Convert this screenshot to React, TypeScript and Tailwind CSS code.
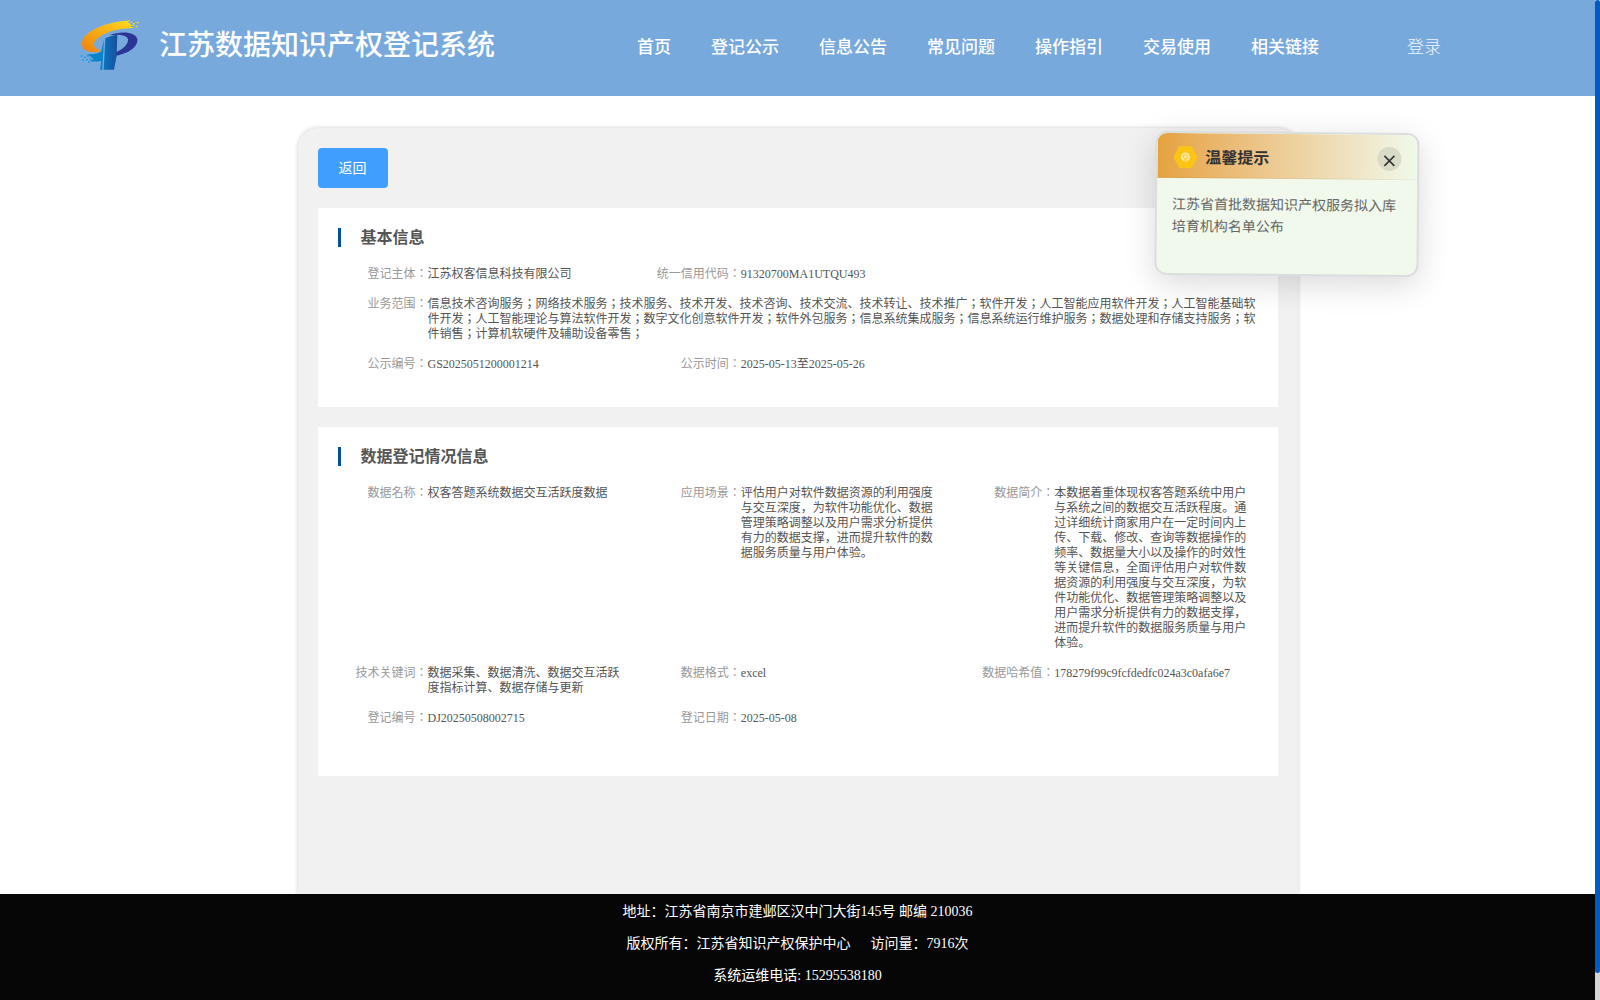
import { useState } from "react";

const NAV = ["首页", "登记公示", "信息公告", "常见问题", "操作指引", "交易使用", "相关链接"];

export default function App() {
  const [showTip, setShowTip] = useState(true);

  return (
    <div className="relative flex h-[1000px] w-[1600px] overflow-hidden bg-white font-['Liberation_Serif','Noto_Sans_CJK_SC',serif]">
      <div className="flex w-[1595px] flex-col">
        {/* HEADER */}
        <header className="flex h-24 shrink-0 items-center bg-[#78a9dd] pl-20 text-white">
          <Logo />
          <h1 className="-mt-[5px] ml-[19px] w-[478px] whitespace-nowrap text-[28px] leading-10 font-medium">
            江苏数据知识产权登记系统
          </h1>
          <nav className="flex gap-10 whitespace-nowrap text-[17px] leading-6 font-medium">
            {NAV.map((item) => (
              <a key={item} href="#">
                {item}
              </a>
            ))}
          </nav>
          <a href="#" className="ml-[88px] text-[17px] leading-6 font-light text-white/90">
            登录
          </a>
        </header>

        {/* CONTENIDO */}
        <main className="mx-auto mt-8 w-[1000px] flex-1 rounded-t-[20px] bg-[#f1f1f1] p-5 shadow-[0_0_4px_rgba(0,0,0,0.2)]">
          <button className="block h-10 w-[70px] rounded bg-[#409eff] pt-px text-sm text-white">返回</button>

          <Card title="基本信息" className="mt-5 h-[199px]">
            <Field label="登记主体">江苏权客信息科技有限公司</Field>
            <Field label="统一信用代码" className="col-span-2">
              91320700MA1UTQU493
            </Field>
            <Field label="业务范围" className="col-span-3">
              信息技术咨询服务；网络技术服务；技术服务、技术开发、技术咨询、技术交流、技术转让、技术推广；软件开发；人工智能应用软件开发；人工智能基础软件开发；人工智能理论与算法软件开发；数字文化创意软件开发；软件外包服务；信息系统集成服务；信息系统运行维护服务；数据处理和存储支持服务；软件销售；计算机软硬件及辅助设备零售；
            </Field>
            <Field label="公示编号">GS2025051200001214</Field>
            <Field label="公示时间">2025-05-13至2025-05-26</Field>
          </Card>

          <Card title="数据登记情况信息" className="mt-5 h-[349px]">
            <Field label="数据名称">权客答题系统数据交互活跃度数据</Field>
            <Field label="应用场景">
              评估用户对软件数据资源的利用强度与交互深度，为软件功能优化、数据管理策略调整以及用户需求分析提供有力的数据支撑，进而提升软件的数据服务质量与用户体验。
            </Field>
            <Field label="数据简介">
              本数据着重体现权客答题系统中用户与系统之间的数据交互活跃程度。通过详细统计商家用户在一定时间内上传、下载、修改、查询等数据操作的频率、数据量大小以及操作的时效性等关键信息，全面评估用户对软件数据资源的利用强度与交互深度，为软件功能优化、数据管理策略调整以及用户需求分析提供有力的数据支撑，进而提升软件的数据服务质量与用户体验。
            </Field>
            <Field label="技术关键词">数据采集、数据清洗、数据交互活跃度指标计算、数据存储与更新</Field>
            <Field label="数据格式">excel</Field>
            <Field label="数据哈希值">178279f99c9fcfdedfc024a3c0afa6e7</Field>
            <Field label="登记编号">DJ20250508002715</Field>
            <Field label="登记日期">2025-05-08</Field>
          </Card>
        </main>

        {/* FOOTER */}
        <footer className="z-10 h-[106px] shrink-0 bg-[#060606] pt-0.5 text-center text-sm leading-8 text-white">
          <p>地址：江苏省南京市建邺区汉中门大街145号 邮编 210036</p>
          <p>
            版权所有：江苏省知识产权保护中心<span className="ml-5">访问量：7916次</span>
          </p>
          <p>系统运维电话: 15295538180</p>
        </footer>
      </div>

      {/* SCROLL */}
      <div className="w-[5px] bg-[#d5d5d5]">
        <div className="h-[973px] rounded-[3px] bg-[#0359c4]" />
      </div>

      {showTip && <Tip onClose={() => setShowTip(false)} />}
    </div>
  );
}

/* ---------------- COMPONENTES ---------------- */

function Card({
  title,
  className,
  children,
}: {
  title: string;
  className: string;
  children: React.ReactNode;
}) {
  return (
    <section className={`bg-white pt-5 pl-5 ${className}`}>
      <h2 className="flex h-[19px] items-center border-l-[3px] border-[#00529b] pl-5 text-base font-bold text-[#555]">
        {title}
      </h2>
      <div className="mt-5 grid grid-cols-3 gap-y-[15px] font-['Liberation_Serif','Noto_Sans_CJK_JP',serif] text-xs leading-[15px]">
        {children}
      </div>
    </section>
  );
}

function Field({
  label,
  className = "",
  children,
}: {
  label: string;
  className?: string;
  children: React.ReactNode;
}) {
  return (
    <div className={`flex pr-5 ${className}`}>
      <span className="flex w-[90px] shrink-0 justify-end whitespace-nowrap text-[#999]">{label}：</span>
      <span className="min-w-0 flex-1 text-[#555]">{children}</span>
    </div>
  );
}

function Tip({ onClose }: { onClose: () => void }) {
  return (
    <aside className="absolute top-[132px] left-[1155px] z-20 h-36 w-[264px] rotate-[0.5deg] overflow-hidden rounded-xl border-2 border-[#dcdedd] bg-[#f0f9eb] shadow-[0_8px_32px_rgba(0,0,0,0.15)]">
      <div className="flex h-[45px] items-center border-b border-black/5 bg-linear-to-r from-[#e6a23c] to-[#f0f9eb] pt-1 pr-4 pl-4">
        <svg width="24" height="22" viewBox="0 0 24 22">
          <path d="M6 0h12l6 11-6 11H6L0 11z" fill="#fcc515" />
          <circle cx="12" cy="11" r="4.5" fill="#fff" opacity=".6" />
          <circle cx="12" cy="10.5" r="2.2" fill="none" stroke="#fcc515" opacity=".7" />
          <path d="M10.5 14h3" stroke="#fcc515" />
        </svg>
        <h3 className="ml-2 flex-1 pt-0.5 text-base font-bold text-[#333]">温馨提示</h3>
        <button onClick={onClose} className="flex size-6 items-center justify-center rounded-full bg-[#d9dbc9]">
          <svg width="12" height="12" viewBox="0 0 12 12" className="mt-[3px]" stroke="#333" strokeWidth="1.6">
            <path d="M1 1l10 10M11 1L1 11" />
          </svg>
        </button>
      </div>
      <p className="pt-4 pr-4 pl-[15px] text-sm leading-[22px] text-[#666]">
        江苏省首批数据知识产权服务拟入库培育机构名单公布
      </p>
    </aside>
  );
}

function Logo() {
  return (
    <svg width="60" height="53" viewBox="60 54 180 159" className="-mt-[7px] shrink-0">
      <defs>
        <linearGradient id="swoosh" x1="0" y1="1" x2="1" y2="0">
          <stop offset="0" stopColor="#f07f09" />
          <stop offset="1" stopColor="#ffd91f" />
        </linearGradient>
        <linearGradient id="stem" x1="0" y1="0" x2="1" y2="0">
          <stop offset="0" stopColor="#0a74bc" />
          <stop offset="1" stopColor="#1a4f9e" />
        </linearGradient>
      </defs>
      <path
        d="M190 63C148 66 80 88 67 122c-6 20 8 32 30 34l18 0 8-6c-16-2-22-9-21-18 2-20 44-42 90-46l24-2-7-7 5-5-10-3 2-6z"
        fill="url(#swoosh)"
      />
      <path
        d="M196 62h6v4h-6zM205 60h5v4h-5zM203 68h6v4h-6zM212 65h5v4h-5zM220 69h5v4h-5zM230 66h6v4h-6zM208 75h6v4h-6zM217 74h5v4h-5zM213 81h6v3h-6zM227 78h6v4h-6z"
        fill="#ffd91f"
      />
      <path d="M148 106c36-14 80-10 84 12 3 24-32 46-70 50l2-10c24-8 42-26 40-40-2-12-26-17-56-12z" fill="#2b3595" />
      <path d="M136 114l36-11-2 64-8 42h-31z" fill="url(#stem)" />
      <path d="M132 118l-5 91-7 0 4-26c-14 3-26 2-36-3l14-2-10-8-12-8c20 2 34 -1 44-8z" fill="#0a84c8" />
      <path
        d="M62 166h6v4h-6zM72 170h6v4h-6zM81 166h6v4h-6zM66 178h5v4h-5zM77 177h7v4h-7zM88 174h6v4h-6zM84 184h6v4h-6zM95 182h7v4h-7z"
        fill="#1b9ee0"
      />
    </svg>
  );
}
